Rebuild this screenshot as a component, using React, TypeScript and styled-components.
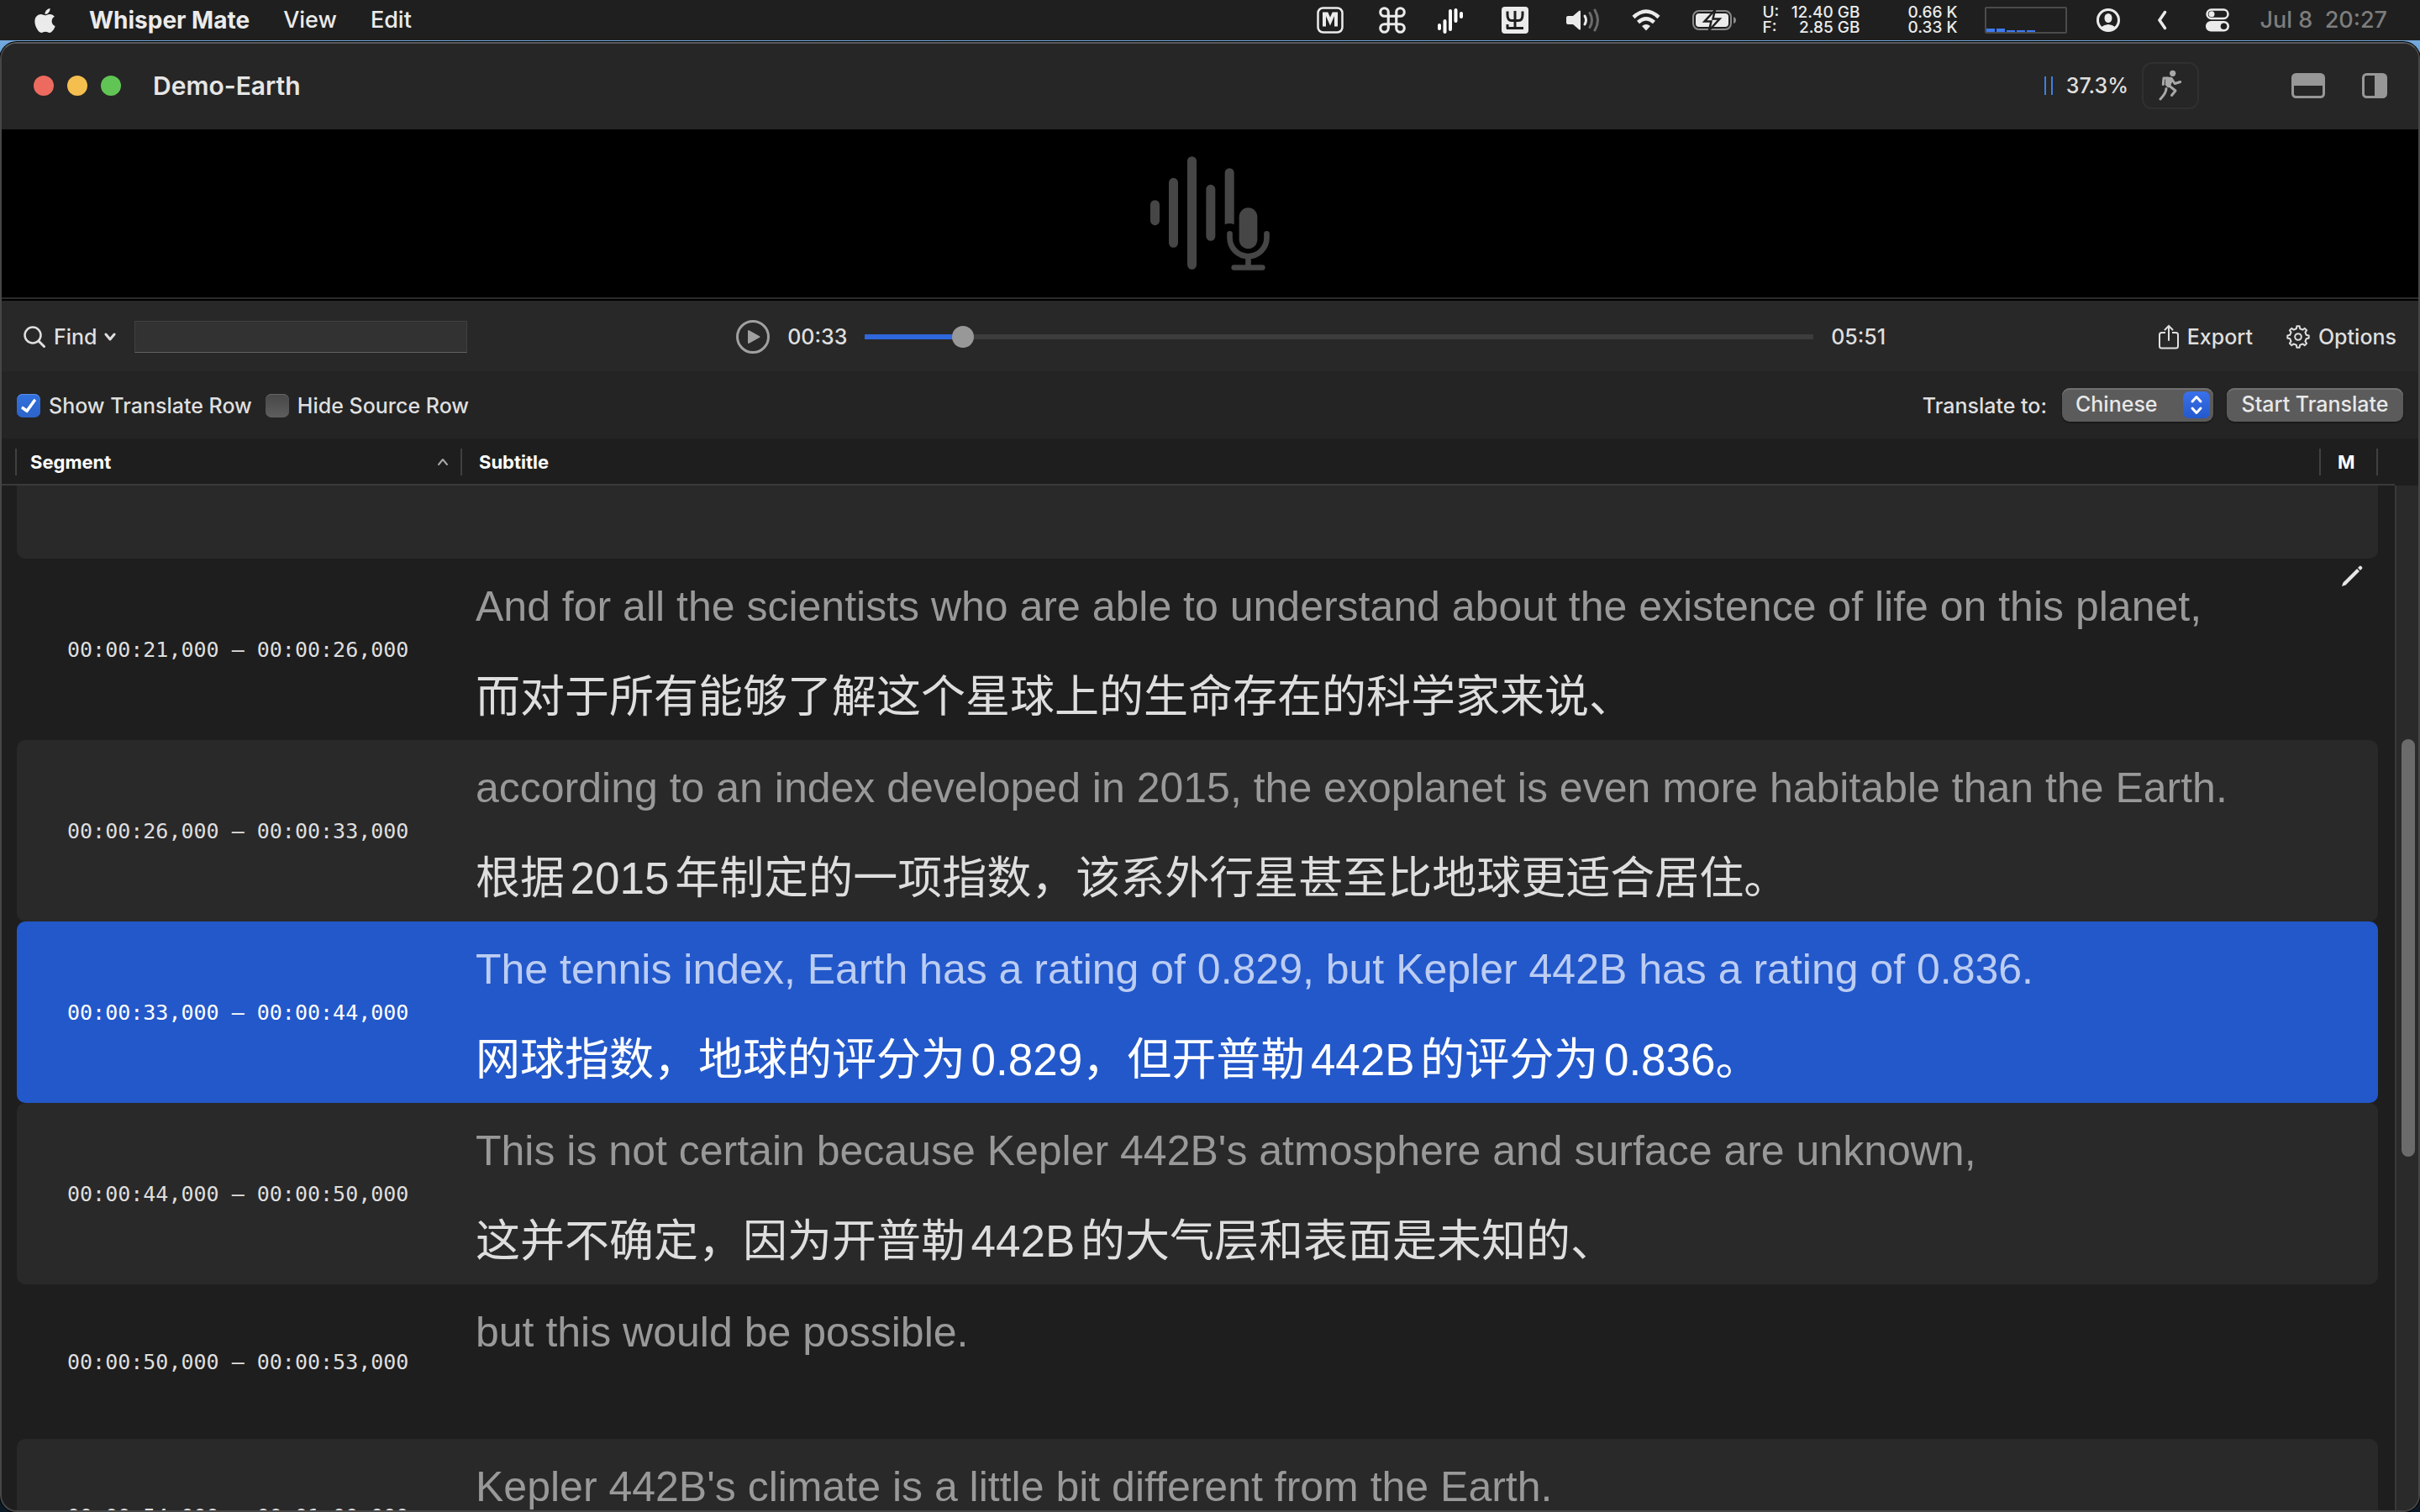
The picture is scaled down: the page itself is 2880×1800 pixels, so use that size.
import React, { useState } from 'react';
import styled, { createGlobalStyle, css } from 'styled-components';
import { FaApple } from 'react-icons/fa';
import { Command } from 'lucide-react';

const sans = '"Inter", "Noto Sans CJK SC", "Liberation Sans", sans-serif';
const reading = '"Liberation Sans", "Noto Sans CJK SC", sans-serif';
const mono = '"DejaVu Sans Mono", "Liberation Mono", monospace';

const GlobalStyle = createGlobalStyle`
  *, *::before, *::after { box-sizing: border-box; }
  body {
    margin: 0;
    background: #10202c;
    color: #dfdfdf;
    font-family: ${sans};
    font-size: 25px;
    font-weight: 500;
    line-height: 32px;
  }
  button, input, select { font: inherit; color: inherit; }
  button { border: 0; padding: 0; background: none; }
  svg { display: block; flex: none; }
`;

const Desktop = styled.div`
  height: 100vh;
  display: flex;
  flex-direction: column;
  gap: 2px;
  overflow: hidden;
  background: linear-gradient(#84b6e6, #6ea6dc 60px, #0b1a26 400px);
`;

/* ---------- system menu bar ---------- */

const MenuBar = styled.header`
  flex: none;
  height: 48px;
  display: flex;
  align-items: center;
  justify-content: space-between;
  padding: 0 39px 0 37px;
  background: #1f1f1f;
  color: #ebebeb;
  font-size: 27px;
`;

const MenuGroup = styled.nav`
  display: flex;
  align-items: center;
  gap: 40px;
`;

const AppleMark = styled(FaApple)`
  margin-right: -4px;
`;

const MenuItem = styled.button<{ $bold?: boolean }>`
  ${(p) => p.$bold && css`font-size: 28px; font-weight: 700;`}
`;

const StatusGroup = styled.div`
  display: flex;
  align-items: center;
  gap: 32px;
`;

const StatusSlot = styled.div<{ $width: number }>`
  width: ${(p) => p.$width}px;
  display: flex;
  justify-content: center;
`;

const Stat = styled.dl<{ $width: number }>`
  width: ${(p) => p.$width}px;
  margin: 0;
  display: grid;
  grid-template-columns: auto 1fr;
  font-size: 19px;
  line-height: 18px;
  dt, dd { margin: 0; }
  dd { text-align: right; }
`;

const LoadGraph = styled.div`
  width: 98px;
  height: 32px;
  display: flex;
  align-items: flex-end;
  gap: 2px;
  border: 2px solid #4b4b4b;
  border-radius: 2px;
`;

const LoadBar = styled.i`
  width: 10px;
  background: #3d7af0;
`;

const Clock = styled.time`
  color: #7d7d7d;
  white-space: pre;
`;

/* ---------- window ---------- */

const Window = styled.main`
  flex: 1;
  min-height: 0;
  display: flex;
  flex-direction: column;
  overflow: hidden;
  border: 2px solid #464646;
  border-top-color: #5a5b5e;
  border-radius: 20px;
  box-shadow: 0 0 0 1px #000;
  background: #1e1e1e;
`;

const TitleBar = styled.div`
  flex: none;
  height: 102px;
  display: flex;
  align-items: center;
  justify-content: space-between;
  padding: 0 37px 2px 38px;
  background: #262626;
`;

const TitleSide = styled.div`
  display: flex;
  align-items: center;
  gap: 16px;
`;

const Light = styled.button<{ $color: string }>`
  width: 24px;
  height: 24px;
  border-radius: 50%;
  background: ${(p) => p.$color};
`;

const Title = styled.h1`
  margin: 0 0 0 22px;
  font-size: 30px;
  font-weight: 600;
  line-height: 36px;
  color: #e6e6e6;
`;

const PauseBars = styled.i`
  width: 10px;
  height: 22px;
  border: solid #3f7fe0;
  border-width: 0 2px;
`;

const RunButton = styled.button`
  width: 68px;
  height: 56px;
  margin-right: 66px;
  display: grid;
  place-items: center;
  border: 2px solid #303030;
  border-radius: 12px;
`;

const PanelButton = styled.button`
  margin-left: 28px;
`;

const Stage = styled.section`
  flex: none;
  height: 200px;
  display: grid;
  place-items: center;
  background: #000;
`;

const Divider = styled.div`
  flex: none;
  height: 4px;
  border-top: 2px solid #2b2b2b;
  background: #000;
`;

const Bar = styled.div`
  flex: none;
  display: flex;
  align-items: center;
  justify-content: space-between;
`;

const PlayerBar = styled(Bar)`
  height: 84px;
  padding: 2px 26px 0 24px;
  background: #282828;
`;

const OptionsBar = styled(Bar)`
  height: 80px;
  padding: 0 18px;
  background: #242424;
`;

const Cluster = styled.div<{ $gap: number }>`
  display: flex;
  align-items: center;
  gap: ${(p) => p.$gap}px;
`;

const Player = styled(Cluster)`
  flex: 0 1 1368px;
  margin-right: 4px;
`;

const TextButton = styled.button<{ $gap: number }>`
  display: flex;
  align-items: center;
  gap: ${(p) => p.$gap}px;
`;

const FindField = styled.input`
  width: 396px;
  height: 38px;
  padding: 0 8px;
  border: 1px solid #404040;
  border-bottom-color: #626262;
  border-radius: 0;
  background: #323232;
  outline: none;
`;

const SeekSlider = styled.input<{ $fill: number }>`
  flex: 1;
  min-width: 0;
  height: 26px;
  margin: 0;
  appearance: none;
  background: linear-gradient(90deg, #2f67dc ${(p) => p.$fill}%, #3d3d3d ${(p) => p.$fill}%)
    center / 100% 6px no-repeat;
  &::-webkit-slider-thumb {
    appearance: none;
    width: 26px;
    height: 26px;
    border-radius: 50%;
    background: #989898;
  }
`;

const CheckLabel = styled.label`
  display: flex;
  align-items: center;
  gap: 10px;
  padding-top: 2px;
`;

const Checkbox = styled.input`
  appearance: none;
  width: 28px;
  height: 28px;
  margin: 0;
  display: grid;
  place-items: center;
  border-radius: 7px;
  background: linear-gradient(#474747, #5e5e5e);
  box-shadow: inset 0 1px 0 #686868;
  &:checked {
    background: linear-gradient(#3272de, #2c63c8);
    box-shadow: inset 0 1px 0 #5a90ea;
  }
  &:checked::after {
    content: '';
    width: 10px;
    height: 19px;
    border: solid #fff;
    border-width: 0 4px 4px 0;
    border-radius: 2px;
    transform: translateY(-2px) rotate(36deg);
  }
`;

const FieldLabel = styled.label`
  padding: 2px 2px 0 0;
`;

const pushSurface = css`
  height: 40px;
  border-radius: 9px;
  background: #5b5b5b;
  box-shadow: inset 0 2px 0 #707070, 0 1px 2px #111;
  color: #e8e8e8;
`;

const SelectWrap = styled.div`
  ${pushSurface}
  width: 180px;
  display: grid;
  align-items: center;
  justify-items: end;
  padding-right: 4px;
  & > * { grid-area: 1 / 1; }
`;

const Select = styled.select`
  width: 180px;
  height: 40px;
  margin-right: -4px;
  padding: 0 40px 2px 16px;
  appearance: none;
  border: 0;
  background: none;
`;

const Stepper = styled.span`
  width: 32px;
  height: 32px;
  display: grid;
  place-items: center;
  border-radius: 7px;
  background: linear-gradient(#3a70ea, #2459cc);
  pointer-events: none;
`;

const PushButton = styled.button`
  ${pushSurface}
  width: 210px;
  padding-bottom: 2px;
`;

/* ---------- subtitle table ---------- */

const TableArea = styled.section`
  flex: 1;
  min-height: 0;
  display: grid;
  grid-template-columns: minmax(0, 1fr) 28px;
  overflow: hidden;
`;

const Table = styled.table`
  display: block;
  overflow: hidden;
`;

const rowGrid = css`
  display: grid;
  grid-template-columns: 530px minmax(0, 1fr) 70px;
`;

const Head = styled.thead`
  display: block;
  height: 56px;
  padding: 12px 20px 10px 16px;
  border-bottom: 2px solid #3a3a3a;
`;

const HeadRow = styled.tr`
  ${rowGrid}
`;

const HeadCell = styled.th`
  display: flex;
  align-items: center;
  justify-content: space-between;
  height: 32px;
  padding: 0 14px 0 20px;
  border-left: 2px solid #404040;
  font-size: 22px;
  font-weight: 700;
  color: #fff;
  &:first-child { padding-left: 16px; }
  &:last-child { border-right: 2px solid #404040; }
`;

const Body = styled.tbody`
  display: block;
  padding: 0 20px 0 18px;
`;

type Tone = 'plain' | 'alt' | 'active';
const toneColor: Record<Tone, string> = { plain: 'transparent', alt: '#292929', active: '#2358ca' };

const Row = styled.tr<{ $tone: Tone; $tall?: boolean }>`
  ${rowGrid}
  height: ${(p) => (p.$tall ? 216 : 184)}px;
  grid-template-rows: 100%;
  border-radius: 10px;
  background: ${(p) => toneColor[p.$tone]};
  color: ${(p) => (p.$tone === 'active' ? '#ffffff' : '#dedede')};
  font-weight: 400;
`;

const CutRow = styled(Row)`
  height: 87px;
  border-radius: 0 0 10px 10px;
`;

const TimeCell = styled.td`
  display: flex;
  align-items: center;
  padding: 2px 0 0 60px;
  font-family: ${mono};
  font-size: 25px;
  white-space: nowrap;
`;

const TextCell = styled.td`
  padding: 3px 0 0 16px;
  font-family: ${reading};
  font-size: 50px;
  line-height: 108px;
  white-space: nowrap;
`;

const Source = styled.p<{ $active: boolean }>`
  margin: 0;
  color: ${(p) => (p.$active ? '#bccdf2' : '#999999')};
`;

const Translation = styled.p`
  margin: 0;
  font-size: 53px;
  text-autospace: normal;
`;

const MarkCell = styled.td`
  padding: 8px 0 0 26px;
`;

const ScrollTrack = styled.div`
  margin-top: 56px;
  padding: 0 4px 0 6px;
  display: flex;
  flex-direction: column;
  border-left: 2px solid #3a3a3a;
  background: #2a2a2a;
`;

const ScrollPart = styled.div<{ $grow: number; $thumb?: boolean }>`
  flex: ${(p) => p.$grow} 0 0;
  ${(p) => p.$thumb && css`border-radius: 8px; background: #6b6b6b;`}
`;

/* ---------- drawings ---------- */

const Svg = (p: { w: number; h: number; box?: string; children: React.ReactNode }) => (
  <svg width={p.w} height={p.h} viewBox={p.box ?? `0 0 ${p.w} ${p.h}`} fill="none" aria-hidden="true">
    {p.children}
  </svg>
);

const MarkM = () => (
  <Svg w={32} h={32}>
    <rect x="1.5" y="1.5" width="29" height="29" rx="6" stroke="#ebebeb" strokeWidth="2.5" />
    <path d="M9 23.500V8.500h3l4 9 4-9h3v15" stroke="#ebebeb" strokeWidth="4" />
  </Svg>
);

const WaveMark = () => (
  <Svg w={30} h={32}>
    <path d="M2 22v4M8.500 17v13M15 5v22M21.500 4v13M28 8v4" stroke="#fff" strokeWidth="4" strokeLinecap="round" />
  </Svg>
);

const InputMark = () => (
  <Svg w={32} h={32}>
    <rect width="32" height="32" rx="4" fill="#ebebeb" />
    <path d="M16 5v21M7 5.500v4q0 7 5 7h8q5 0 5-7v-4M6 25.500h20M7 21v5" stroke="#1f1f1f" strokeWidth="3" />
  </Svg>
);

const Speaker = () => (
  <Svg w={40} h={28}>
    <path d="M2 9h6l7-6q2-1.500 2 1v20q0 2.500-2 1l-7-6H2q-2 0-2-2v-6q0-2 2-2z" fill="#ebebeb" />
    <path d="M22 9q3 5 0 10" stroke="#ebebeb" strokeWidth="3" strokeLinecap="round" />
    <path d="M28 5.500q5 8.500 0 17M34 2q7 12 0 24" stroke="#6b6b6b" strokeWidth="3" strokeLinecap="round" />
  </Svg>
);

const Wifi = () => (
  <Svg w={34} h={26}>
    <path d="M2 9.500q15-14 30 0" stroke="#ebebeb" strokeWidth="4.500" />
    <path d="M7.500 15.500q9.500-8.500 19 0" stroke="#ebebeb" strokeWidth="4.500" />
    <path d="M12 20q5-4 10 0l-5 5.500z" fill="#ebebeb" />
  </Svg>
);

const Battery = () => (
  <Svg w={52} h={28}>
    <rect x="1" y="3" width="45" height="22" rx="7" stroke="#8a8a8a" strokeWidth="2" />
    <path d="M49 10q3 1 3 4t-3 4z" fill="#8a8a8a" />
    <rect x="4" y="6" width="39" height="16" rx="4" fill="#ebebeb" />
    <path d="M27 2L14.500 15.500h8L20 26l12.500-13.500h-8z" fill="#ebebeb" stroke="#1f1f1f" strokeWidth="2.500" />
  </Svg>
);

const UserMark = () => (
  <Svg w={28} h={28}>
    <circle cx="14" cy="14" r="12.500" stroke="#ebebeb" strokeWidth="3" />
    <ellipse cx="14" cy="11.500" rx="4.500" ry="5.500" fill="#ebebeb" />
    <path d="M5 22.500q9-7 18 0-9 8-18 0z" fill="#ebebeb" />
  </Svg>
);

const BackMark = () => (
  <Svg w={12} h={24}>
    <path d="M9.500 2.500L3 12l6.500 9.500" stroke="#ebebeb" strokeWidth="3.500" strokeLinecap="round" />
  </Svg>
);

const ControlCenter = () => (
  <Svg w={28} h={28}>
    <rect x="1.500" y="1.500" width="25" height="10.500" rx="5.200" stroke="#ebebeb" strokeWidth="2.500" />
    <circle cx="7" cy="6.700" r="3.500" fill="#ebebeb" />
    <rect y="15" width="28" height="12.500" rx="6.200" fill="#ebebeb" />
    <circle cx="21.500" cy="21.200" r="3.800" fill="#1f1f1f" />
  </Svg>
);

const Runner = () => (
  <Svg w={28} h={38}>
    <circle cx="16.700" cy="4.300" r="3.600" fill="#a8a8a8" />
    <path d="M9.500 10h5.500l1 1.500-3 7-1.500 1.500-2.500-2.500z" fill="#a8a8a8" stroke="#a8a8a8" strokeWidth="2.500" strokeLinejoin="round" />
    <g stroke="#a8a8a8" strokeWidth="3" strokeLinecap="round" strokeLinejoin="round">
      <path d="M11 10H6l-.7 7.500" />
      <path d="M15.500 11l3.700 5.500 6.500-2" />
      <path d="M12.500 19l7.500 6-4.500 5.500" />
      <path d="M9 22.500Q9 27.500 2 35" />
    </g>
  </Svg>
);

const BottomPanel = () => (
  <Svg w={40} h={30}>
    <rect x="1.500" y="1.500" width="37" height="27" rx="4" stroke="#979797" strokeWidth="3" />
    <path d="M2 2h36v13H2z" fill="#979797" />
  </Svg>
);

const SidePanel = () => (
  <Svg w={30} h={30}>
    <rect x="1.500" y="1.500" width="27" height="27" rx="4" stroke="#979797" strokeWidth="3" />
    <path d="M15 2h13v26H15z" fill="#979797" />
  </Svg>
);

const VoiceArt = () => (
  <Svg w={142} h={136} box="147 108 426 408">
    <g stroke="#464646" strokeWidth="33" strokeLinecap="round">
      <path d="M163.500 281v57M229.500 202v216M295.500 125v371M362.500 226v168" />
    </g>
    <path d="M413 352V167a16.500 16.500 0 0 1 33 0v185q-16-8-33 0z" fill="#464646" />
    <rect x="464" y="292" width="65" height="146" rx="32" fill="#464646" />
    <path d="M430.500 385v14a66 66 0 0 0 132 0v-14" stroke="#464646" strokeWidth="20" strokeLinecap="round" />
    <path d="M496.500 470v30M446 505.500h101" stroke="#464646" strokeWidth="20" strokeLinecap="round" />
  </Svg>
);

const SearchMark = () => (
  <Svg w={30} h={26}>
    <circle cx="13" cy="11" r="9.500" stroke="#dfdfdf" strokeWidth="2.500" />
    <path d="M20 18l6.500 6.500" stroke="#dfdfdf" strokeWidth="3" strokeLinecap="round" />
  </Svg>
);

const Chevron = (p: { up?: boolean; color?: string; weight?: number }) => (
  <Svg w={14} h={10}>
    <path
      d={p.up ? 'M2 8l5-6 5 6' : 'M2 2l5 6 5-6'}
      stroke={p.color ?? '#dfdfdf'}
      strokeWidth={p.weight ?? 3}
      strokeLinecap="round"
      strokeLinejoin="round"
    />
  </Svg>
);

const PlayMark = () => (
  <Svg w={40} h={40}>
    <circle cx="20" cy="20" r="18.500" stroke="#a0a0a0" strokeWidth="3" />
    <path d="M15 13v14l12.500-7z" fill="#a0a0a0" stroke="#a0a0a0" strokeWidth="2" strokeLinejoin="round" />
  </Svg>
);

const ShareMark = () => (
  <Svg w={24} h={30}>
    <path d="M8 10H3.500Q1 10 1 12.500V26q0 2.500 2.500 2.500h17Q23 28.500 23 26V12.500Q23 10 20.500 10H16" stroke="#dfdfdf" strokeWidth="2" />
    <path d="M12 19V2M7.500 6.500L12 2l4.500 4.500" stroke="#dfdfdf" strokeWidth="2" strokeLinecap="round" />
  </Svg>
);

const gearOutline = (teeth: number, outer: number, inner: number) => {
  const step = (Math.PI * 2) / teeth;
  const at = (r: number, a: number) => `${(14 + r * Math.sin(a)).toFixed(2)} ${(14 - r * Math.cos(a)).toFixed(2)}`;
  let d = '';
  for (let i = 0; i < teeth; i += 1) {
    const a = i * step;
    d += `${i ? 'L' : 'M'}${at(inner, a - step * 0.28)}L${at(outer, a - step * 0.16)}L${at(outer, a + step * 0.16)}L${at(inner, a + step * 0.28)}`;
  }
  return `${d}Z`;
};

const GearMark = () => (
  <Svg w={28} h={28}>
    <path d={gearOutline(8, 12.8, 10)} stroke="#dfdfdf" strokeWidth="2" strokeLinejoin="round" />
    <circle cx="14" cy="14" r="3.800" stroke="#dfdfdf" strokeWidth="2" />
  </Svg>
);

const StepperMark = () => (
  <Svg w={16} h={24}>
    <path d="M3 8l5-5.500L13 8M3 16l5 5.500 5-5.500" stroke="#fff" strokeWidth="3" strokeLinecap="round" strokeLinejoin="round" />
  </Svg>
);

const PencilMark = () => (
  <Svg w={26} h={26}>
    <path d="M1 25l1.500-4.500L19 4l3 3L5.500 23.500zM20 3l2-2q1-1 2.500.500t.500 2.500l-2 2z" fill="#e6e6e6" />
  </Svg>
);

/* ---------- data ---------- */

interface Segment {
  time: string;
  source: string;
  translation?: string;
  tone: Tone;
  editable?: boolean;
}

const segments: Segment[] = [
  {
    time: '00:00:21,000 – 00:00:26,000',
    source: 'And for all the scientists who are able to understand about the existence of life on this planet,',
    translation: '而对于所有能够了解这个星球上的生命存在的科学家来说、',
    tone: 'plain',
    editable: true,
  },
  {
    time: '00:00:26,000 – 00:00:33,000',
    source: 'according to an index developed in 2015, the exoplanet is even more habitable than the Earth.',
    translation: '根据2015年制定的一项指数，该系外行星甚至比地球更适合居住。',
    tone: 'alt',
  },
  {
    time: '00:00:33,000 – 00:00:44,000',
    source: 'The tennis index, Earth has a rating of 0.829, but Kepler 442B has a rating of 0.836.',
    translation: '网球指数，地球的评分为0.829，但开普勒442B的评分为0.836。',
    tone: 'active',
  },
  {
    time: '00:00:44,000 – 00:00:50,000',
    source: "This is not certain because Kepler 442B's atmosphere and surface are unknown,",
    translation: '这并不确定，因为开普勒442B的大气层和表面是未知的、',
    tone: 'alt',
  },
  { time: '00:00:50,000 – 00:00:53,000', source: 'but this would be possible.', tone: 'plain' },
  {
    time: '00:00:54,000 – 00:01:00,000',
    source: "Kepler 442B's climate is a little bit different from the Earth.",
    tone: 'alt',
  },
];

const loadSamples = [4, 4, 2, 2, 2];
const duration = 351;
const clock = (s: number) =>
  `${String(Math.floor(s / 60)).padStart(2, '0')}:${String(s % 60).padStart(2, '0')}`;

export default function App() {
  const [position, setPosition] = useState(33);
  const [showTranslation, setShowTranslation] = useState(true);
  const [hideSource, setHideSource] = useState(false);

  return (
    <>
      <GlobalStyle />
      <Desktop>
        <MenuBar>
          <MenuGroup>
            <AppleMark size={33} />
            <MenuItem $bold>Whisper Mate</MenuItem>
            <MenuItem>View</MenuItem>
            <MenuItem>Edit</MenuItem>
          </MenuGroup>
          <StatusGroup>
            <StatusSlot $width={42}><MarkM /></StatusSlot>
            <StatusSlot $width={42}><Command size={38} strokeWidth={2} /></StatusSlot>
            <StatusSlot $width={32}><WaveMark /></StatusSlot>
            <StatusSlot $width={58}><InputMark /></StatusSlot>
            <StatusSlot $width={40}><Speaker /></StatusSlot>
            <StatusSlot $width={46}><Wifi /></StatusSlot>
            <StatusSlot $width={52}><Battery /></StatusSlot>
            <Stat $width={116}>
              <dt>U:</dt><dd>12.40 GB</dd>
              <dt>F:</dt><dd>2.85 GB</dd>
            </Stat>
            <Stat $width={84}>
              <dt /><dd>0.66 K</dd>
              <dt /><dd>0.33 K</dd>
            </Stat>
            <LoadGraph>
              {loadSamples.map((h, i) => <LoadBar key={i} style={{ height: h }} />)}
            </LoadGraph>
            <StatusSlot $width={34}><UserMark /></StatusSlot>
            <StatusSlot $width={30}><BackMark /></StatusSlot>
            <StatusSlot $width={38}><ControlCenter /></StatusSlot>
            <Clock>{'Jul 8  20:27'}</Clock>
          </StatusGroup>
        </MenuBar>

        <Window>
          <TitleBar>
            <TitleSide>
              <Light $color="#ed6a5f" aria-label="Close" />
              <Light $color="#f5bf4f" aria-label="Minimize" />
              <Light $color="#61c555" aria-label="Zoom" />
              <Title>Demo-Earth</Title>
            </TitleSide>
            <TitleSide>
              <PauseBars />
              <span>37.3%</span>
              <RunButton aria-label="Run"><Runner /></RunButton>
              <PanelButton aria-label="Toggle bottom panel"><BottomPanel /></PanelButton>
              <PanelButton aria-label="Toggle side panel"><SidePanel /></PanelButton>
            </TitleSide>
          </TitleBar>

          <Stage><VoiceArt /></Stage>
          <Divider />

          <PlayerBar>
            <Cluster $gap={22}>
              <TextButton $gap={8}><SearchMark />Find<Chevron /></TextButton>
              <FindField aria-label="Find text" />
            </Cluster>
            <Player $gap={21}>
              <button aria-label="Play"><PlayMark /></button>
              <span>{clock(position)}</span>
              <SeekSlider
                type="range"
                aria-label="Position"
                min={0}
                max={duration}
                value={position}
                $fill={(position / duration) * 100}
                onChange={(e) => setPosition(Number(e.target.value))}
              />
              <span>{clock(duration)}</span>
            </Player>
            <Cluster $gap={40}>
              <TextButton $gap={10}><ShareMark />Export</TextButton>
              <TextButton $gap={10}><GearMark />Options</TextButton>
            </Cluster>
          </PlayerBar>

          <OptionsBar>
            <Cluster $gap={16}>
              <CheckLabel>
                <Checkbox type="checkbox" checked={showTranslation} onChange={(e) => setShowTranslation(e.target.checked)} />
                Show Translate Row
              </CheckLabel>
              <CheckLabel>
                <Checkbox type="checkbox" checked={hideSource} onChange={(e) => setHideSource(e.target.checked)} />
                Hide Source Row
              </CheckLabel>
            </Cluster>
            <Cluster $gap={16}>
              <FieldLabel htmlFor="language">Translate to:</FieldLabel>
              <SelectWrap>
                <Select id="language" defaultValue="Chinese">
                  <option>Chinese</option>
                  <option>English</option>
                </Select>
                <Stepper><StepperMark /></Stepper>
              </SelectWrap>
              <PushButton>Start Translate</PushButton>
            </Cluster>
          </OptionsBar>

          <TableArea>
            <Table>
              <Head>
                <HeadRow>
                  <HeadCell>Segment <Chevron up color="#a8a8a8" weight={2} /></HeadCell>
                  <HeadCell>Subtitle</HeadCell>
                  <HeadCell>M</HeadCell>
                </HeadRow>
              </Head>
              <Body>
                <CutRow $tone="alt"><td /><td /><td /></CutRow>
                {segments.map((s) => (
                  <Row key={s.time} $tone={s.tone} $tall={!!s.translation}>
                    <TimeCell>{s.time}</TimeCell>
                    <TextCell>
                      {!hideSource && <Source $active={s.tone === 'active'}>{s.source}</Source>}
                      {showTranslation && s.translation && <Translation lang="zh-CN">{s.translation}</Translation>}
                    </TextCell>
                    <MarkCell>{s.editable && <PencilMark />}</MarkCell>
                  </Row>
                ))}
              </Body>
            </Table>
            <ScrollTrack>
              <ScrollPart $grow={302} />
              <ScrollPart $grow={497} $thumb />
              <ScrollPart $grow={421} />
            </ScrollTrack>
          </TableArea>
        </Window>
      </Desktop>
    </>
  );
}
